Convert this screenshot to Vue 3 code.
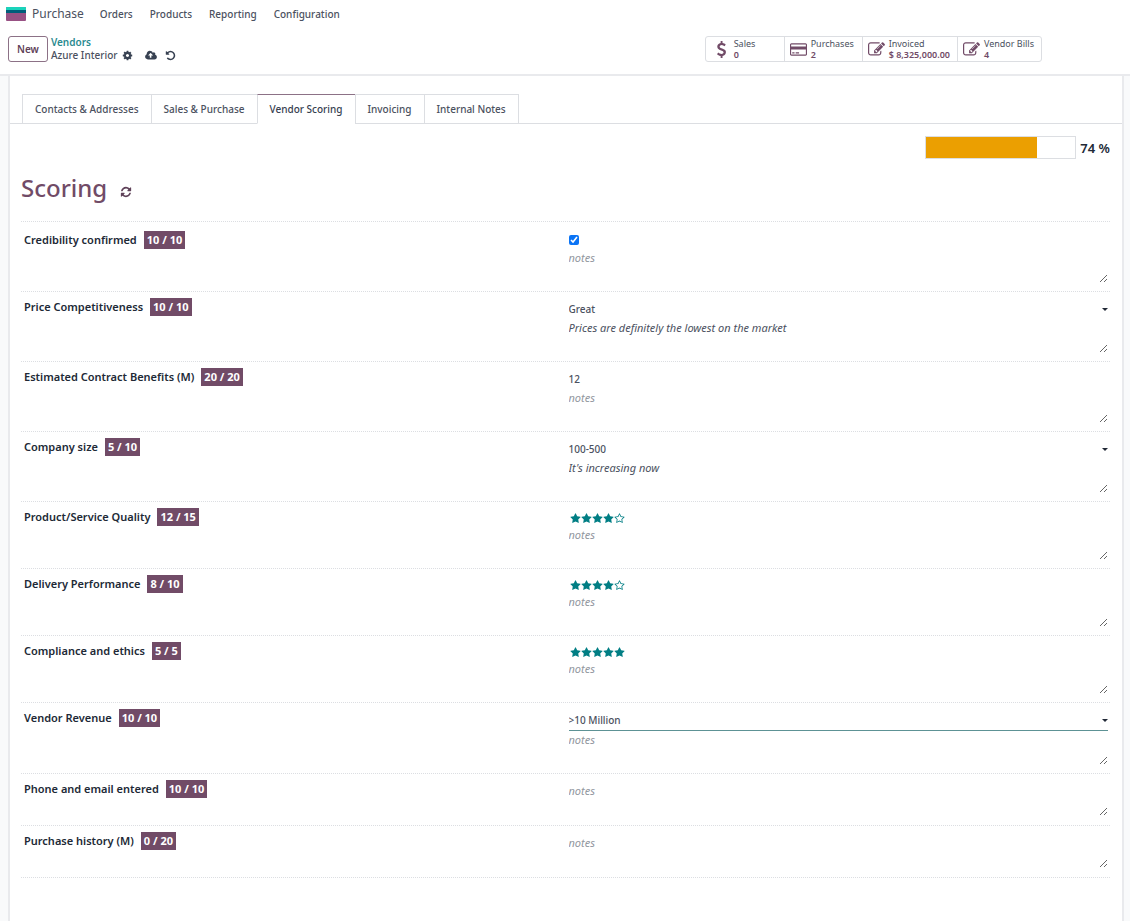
<script setup>
import { ref, computed } from 'vue'

const paths = {
  star: 'M1728 647q0 22-26 48l-363 354 86 500q1 7 1 20 0 21-10.5 35.5t-30.5 14.5q-19 0-40-12l-449-236-449 236q-22 12-40 12-21 0-31.5-14.5t-10.5-35.5q0-6 2-20l86-500-364-354q-25-27-25-48 0-37 56-46l502-73 225-455q19-41 49-41t49 41l225 455 502 73q56 9 56 46z',
  starEmpty: 'M1201 1004l306-297-422-62-189-382-189 382-422 62 306 297-73 421 378-199 377 199zm527-357q0 22-26 48l-363 354 86 500q1 7 1 20 0 50-41 50-19 0-40-12l-449-236-449 236q-22 12-40 12-21 0-31.5-14.5t-10.5-35.5q0-6 2-20l86-500-364-354q-25-27-25-48 0-37 56-46l502-73 225-455q19-41 49-41t49 41l225 455 502 73q56 9 56 46z',
  refresh: 'M1639 1056q0 5-1 7-64 268-268 434.5t-478 166.5q-146 0-282.5-55t-243.5-157l-129 129q-19 19-45 19t-45-19-19-45v-448q0-26 19-45t45-19h448q26 0 45 19t19 45-19 45l-137 137q71 66 161 102t187 36q134 0 250-65t186-179q11-17 53-117 8-23 30-23h192q13 0 22.5 9.5t9.5 22.5zm25-800v448q0 26-19 45t-45 19h-448q-26 0-45-19t-19-45 19-45l138-138q-148-137-349-137-134 0-250 65t-186 179q-11 17-53 117-8 23-30 23h-199q-13 0-22.5-9.5t-9.5-22.5v-7q65-268 270-434.5t480-166.5q146 0 284 55.5t245 156.5l130-129q19-19 45-19t45 19 19 45z',
  cog: 'M1152 896q0-106-75-181t-181-75-181 75-75 181 75 181 181 75 181-75 75-181zm512-109v222q0 12-8 23t-20 13l-185 28q-19 54-39 91 35 50 107 138 10 12 10 25t-9 23q-27 37-99 108t-94 71q-12 0-26-9l-138-108q-44 23-91 38-16 136-29 186-7 28-36 28h-222q-14 0-24.5-8.5t-11.5-21.5l-28-184q-49-16-90-37l-141 107q-10 9-25 9-14 0-25-11-126-114-165-168-7-10-7-23 0-12 8-23 15-21 51-66.5t54-70.5q-27-50-41-99l-183-27q-13-2-21-12.5t-8-23.5v-222q0-12 8-23t19-13l186-28q14-46 39-92-40-57-107-138-10-12-10-24 0-10 9-23 26-36 98.5-107.5t94.5-71.5q13 0 26 10l138 107q44-23 91-38 16-136 29-186 7-28 36-28h222q14 0 24.5 8.5t11.5 21.5l28 184q49 16 90 37l142-107q9-9 24-9 13 0 25 10 129 119 165 170 7 8 7 22 0 12-8 23-15 21-51 66.5t-54 70.5q26 50 41 98l183 28q13 2 21 12.5t8 23.5z',
  undo: 'M1664 896q0 156-61 298t-164 245-245 164-298 61q-172 0-327-72.5t-264-204.5q-7-10-6.5-22.5t8.5-20.5l137-138q10-9 25-9 16 2 23 12 73 95 179 147t225 52q104 0 198.5-40.5t163.5-109.5 109.5-163.5 40.5-198.5-40.5-198.5-109.5-163.5-163.5-109.5-198.5-40.5q-98 0-188 35.5t-160 101.5l137 138q31 30 14 69-17 40-59 40h-448q-26 0-45-19t-19-45v-448q0-42 40-59 39-17 69 14l130 129q107-101 244.5-156.5t284.5-55.5q156 0 298 61t245 164 164 245 61 298z',
  cloud: 'M1216 864q0-14-9-23l-352-352q-9-9-23-9t-23 9l-351 351q-10 12-10 24 0 14 9 23t23 9h224v352q0 13 9.5 22.5t22.5 9.5h192q13 0 22.5-9.5t9.5-22.5v-352h224q13 0 22.5-9.5t9.5-22.5zm640 288q0 159-112.5 271.5t-271.5 112.5h-1088q-185 0-316.5-131.5t-131.5-316.5q0-130 70-240t188-165q-2-30-2-43 0-212 150-362t362-150q156 0 285.5 87t188.5 231q71-62 166-62 106 0 181 75t75 181q0 76-41 138 130 31 213.5 135.5t83.5 238.5z',
  edit: 'M888 1184l116-116-152-152-116 116v56h96v96h56zm440-720q-16-16-33 1l-350 350q-17 17-1 33t33-1l350-350q17-17 1-33zm80 594v190q0 119-84.5 203.5t-203.5 84.5h-832q-119 0-203.5-84.5t-84.5-203.5v-832q0-119 84.5-203.5t203.5-84.5h832q63 0 117 25 15 7 18 23 3 17-9 29l-49 49q-14 14-32 8-23-6-45-6h-832q-66 0-113 47t-47 113v832q0 66 47 113t113 47h832q66 0 113-47t47-113v-126q0-13 9-22l64-64q15-15 35-7t20 29zm-96-738l288 288-672 672h-288v-288zm444 132l-92 92-288-288 92-92q28-28 68-28t68 28l152 152q28 28 28 68t-28 68z',
  dollar: 'M1362 1185q0 153-99.5 263.5t-258.5 136.5v175q0 14-9 23t-23 9h-135q-13 0-22.5-9.5t-9.5-22.5v-175q-66-9-127.5-31t-101.5-44.5-74-48-46.5-37.5-17.5-18q-17-21-2-41l103-135q7-10 23-12 15-2 24 9l2 2q113 99 243 125 37 8 74 8 81 0 142.5-43t61.5-122q0-28-15-53t-33.5-42-58.5-37.5-66-32-80-32.5q-39-16-61.5-25t-61.5-26.5-62.5-31-56.5-35.5-53.5-42.5-43.5-49-35.5-58-21-66.5-8.5-78q0-138 98-242t255-134v-180q0-13 9.5-22.5t22.5-9.5h135q14 0 23 9t9 23v176q57 6 110.5 23t87 33.5 63.5 37.5 39 29 15 14q17 18 5 38l-81 146q-8 15-23 16-14 3-27-7-3-3-14.5-12t-39-26.5-58.5-32-74.5-26-85.5-11.5q-95 0-155 43t-60 111q0 26 8.5 48t29.5 41.5 39.5 33 56 31 60.5 27 70 27.5q53 20 81 31.5t76 35 75.5 42.5 62 50 53 63.5 31.5 76.5 13 94z',
  card: 'M160 192h1600q66 0 113 47t47 113v1088q0 66-47 113t-113 47H160q-66 0-113-47T0 1440V352q0-66 47-113t113-47zm0 128q-32 0-32 32v192h1664V352q0-32-32-32zm-32 576v544q0 32 32 32h1600q32 0 32-32V896zM256 1216h256v128H256zm384 0h384v128H640z'
}

const menus = ['Orders', 'Products', 'Reporting', 'Configuration']
const stats = [
  { icon: 'dollar', label: 'Sales', value: '0' },
  { icon: 'card', label: 'Purchases', value: '2' },
  { icon: 'edit', label: 'Invoiced', value: '$ 8,325,000.00' },
  { icon: 'edit', label: 'Vendor Bills', value: '4' }
]
const tabs = ['Contacts & Addresses', 'Sales & Purchase', 'Vendor Scoring', 'Invoicing', 'Internal Notes']
const activeTab = ref('Vendor Scoring')

const rows = ref([
  { id: 'credibility', label: 'Credibility confirmed', score: 10, max: 10, type: 'check', value: true, notes: '' },
  { id: 'price', label: 'Price Competitiveness', score: 10, max: 10, type: 'select', options: ['Great', 'Average', 'Poor'], value: 'Great', notes: 'Prices are definitely the lowest on the market' },
  { id: 'benefits', label: 'Estimated Contract Benefits (M)', score: 20, max: 20, type: 'text', value: '12', notes: '' },
  { id: 'size', label: 'Company size', score: 5, max: 10, type: 'select', options: ['<100', '100-500', '>500'], value: '100-500', notes: "It's increasing now" },
  { id: 'quality', label: 'Product/Service Quality', score: 12, max: 15, type: 'stars', value: 4, notes: '' },
  { id: 'delivery', label: 'Delivery Performance', score: 8, max: 10, type: 'stars', value: 4, notes: '' },
  { id: 'ethics', label: 'Compliance and ethics', score: 5, max: 5, type: 'stars', value: 5, notes: '' },
  { id: 'revenue', label: 'Vendor Revenue', score: 10, max: 10, type: 'select', options: ['<1 Million', '1-10 Million', '>10 Million'], value: '>10 Million', notes: '', active: true },
  { id: 'contact', label: 'Phone and email entered', score: 10, max: 10, type: 'none', notes: '' },
  { id: 'history', label: 'Purchase history (M)', score: 0, max: 20, type: 'none', notes: '' }
])

const total = ref(74)
const fill = computed(() => ({ width: total.value + '%' }))
</script>

<template>
  <div class="app">
    <header class="top">
      <nav class="navbar">
        <svg class="logo" viewBox="0 0 20 14" aria-hidden="true">
          <rect width="20" height="14" rx="1" fill="#985184" />
          <path d="M1 0h18q1 0 1 1v3H0V1q0-1 1-1z" fill="#1ad3bb" />
          <rect y="3" width="20" height="3" fill="#005e7a" />
        </svg>
        <a href="#" class="brand">Purchase</a>
        <a v-for="m in menus" :key="m" href="#" class="menu">{{ m }}</a>
      </nav>
      <div class="panel">
        <button type="button" class="new">New</button>
        <div class="crumbs">
          <a href="#" class="parent">Vendors</a>
          <div class="current">
            <span>Azure Interior</span>
            <button type="button" class="icon-btn cog" aria-label="Actions">
              <svg viewBox="0 0 1792 1792"><path :d="paths.cog" /></svg>
            </button>
            <button type="button" class="icon-btn cloud" aria-label="Save">
              <svg viewBox="-64 0 1920 1792"><path :d="paths.cloud" /></svg>
            </button>
            <button type="button" class="icon-btn" aria-label="Discard">
              <svg viewBox="0 0 1792 1792"><path :d="paths.undo" /></svg>
            </button>
          </div>
        </div>
        <div class="stats">
          <button v-for="s in stats" :key="s.label" type="button" class="stat">
            <span class="stat-icon">
              <svg :viewBox="s.icon === 'card' ? '0 0 1920 1792' : '0 0 1792 1792'"><path fill-rule="evenodd" :d="paths[s.icon]" /></svg>
            </span>
            <span class="stat-text">
              <span>{{ s.label }}</span>
              <strong>{{ s.value }}</strong>
            </span>
          </button>
        </div>
      </div>
    </header>

    <main class="sheet">
      <div class="tabs" role="tablist">
        <button
          v-for="t in tabs"
          :key="t"
          type="button"
          role="tab"
          class="tab"
          :class="{ active: t === activeTab }"
          :aria-selected="t === activeTab"
          @click="activeTab = t"
        >{{ t }}</button>
      </div>

      <section class="content">
        <div class="total">
          <div class="bar" role="progressbar" aria-label="Total score" :aria-valuenow="total" aria-valuemin="0" aria-valuemax="100">
            <div class="bar-fill" :style="fill"></div>
          </div>
          <span>{{ total }} %</span>
        </div>

        <h1 class="title">
          Scoring
          <button type="button" class="icon-btn refresh" aria-label="Recompute">
            <svg viewBox="0 0 1792 1792"><path :d="paths.refresh" /></svg>
          </button>
        </h1>

        <div class="rows">
          <div v-for="r in rows" :key="r.id" class="row" :class="'row-' + r.type">
            <div class="name">
              <label :for="r.id">{{ r.label }}</label>
              <span class="badge">{{ r.score }} / {{ r.max }}</span>
            </div>
            <div class="value">
              <div v-if="r.type === 'check'" class="check-line">
                <input :id="r.id" v-model="r.value" type="checkbox" />
              </div>
              <div v-else-if="r.type === 'select'" class="select" :class="{ focused: r.active }">
                <select :id="r.id" v-model="r.value">
                  <option v-for="o in r.options" :key="o">{{ o }}</option>
                </select>
                <svg viewBox="0 0 6 3" aria-hidden="true"><path d="M0 0h6L3 3z" /></svg>
              </div>
              <input v-else-if="r.type === 'text'" :id="r.id" v-model="r.value" class="text" type="text" />
              <div v-else-if="r.type === 'stars'" class="rating">
                <button
                  v-for="n in 5"
                  :id="n === 1 ? r.id : undefined"
                  :key="n"
                  type="button"
                  :aria-label="n + ' of 5'"
                  :aria-pressed="n <= r.value"
                  @click="r.value = n"
                >
                  <svg viewBox="0 0 1792 1792"><path :d="n <= r.value ? paths.star : paths.starEmpty" /></svg>
                </button>
              </div>
              <textarea
                :id="r.type === 'none' ? r.id : r.id + '-notes'"
                v-model="r.notes"
                placeholder="notes"
                :aria-label="r.label + ' notes'"
              ></textarea>
            </div>
          </div>
        </div>
      </section>
    </main>
  </div>
</template>

<style>
body {
  margin: 0;
  background: #f9fafb;
}
</style>

<style scoped>
.app {
  min-height: 100vh;
  display: flex;
  flex-direction: column;
  font-family: "Noto Sans", "Open Sans", sans-serif;
  font-size: 10px;
  line-height: 16px;
  font-weight: 500;
  color: #4b5160;
}
.app * {
  box-sizing: border-box;
}
button,
input,
select,
textarea {
  font: inherit;
  color: inherit;
  margin: 0;
  padding: 0;
  border: 0;
  background: none;
}
button {
  cursor: pointer;
}
a {
  color: inherit;
  text-decoration: none;
}
svg {
  display: block;
  fill: currentColor;
}
.top {
  background: #fff;
  border-bottom: 2px solid #e9eaed;
  padding-bottom: 12px;
}
.navbar {
  display: flex;
  align-items: center;
  height: 27px;
  padding: 0 6px;
}
.logo {
  width: 20px;
  height: 14px;
  margin-right: 6px;
}
.brand {
  font-size: 12px;
  font-weight: 400;
  margin-right: 8px;
}
.menu {
  padding: 0 8px;
}
.menu + .menu {
  margin-left: 1px;
}
.panel {
  display: flex;
  align-items: center;
  padding: 9px 88px 0 8px;
}
.new {
  height: 26px;
  padding: 0 8px;
  border: 1px solid #8c7186;
  border-radius: 3px;
  color: #5f4259;
  font-weight: 600;
}
.crumbs {
  margin-left: 3px;
  line-height: 13px;
}
.parent {
  display: block;
  color: #2a8a8f;
  font-weight: 600;
}
.current {
  display: flex;
  align-items: center;
}
.icon-btn svg {
  width: 11px;
  height: 11px;
}
.current .icon-btn {
  color: #374151;
}
.cog {
  margin: 0 12px 0 4px;
}
.cloud {
  margin-right: 8px;
}
.cloud svg {
  width: 12px;
}
.stats {
  display: flex;
  margin-left: auto;
  border: 1px solid #dcdee2;
  border-radius: 3px;
}
.stat {
  display: flex;
  align-items: center;
  min-width: 78px;
  height: 24px;
  padding: 0 7px 0 4px;
  text-align: left;
}
.stat + .stat {
  border-left: 1px solid #dcdee2;
}
.stat-icon {
  display: flex;
  justify-content: center;
  width: 19px;
  margin-right: 3px;
  color: #714b67;
}
.stat-icon svg {
  width: 17px;
  height: 17px;
}
.stat:first-child .stat-icon {
  width: 23px;
  margin-right: 1px;
}
.stat-text {
  display: flex;
  flex-direction: column;
  font-size: 9px;
  line-height: 11px;
  font-weight: 400;
}
.stat-text strong {
  font-weight: 600;
  color: #714b67;
}
.sheet {
  flex: 1;
  margin: 0 6px 0 8px;
  padding-top: 18px;
  background: #fff;
  border: solid #e9eaed;
  border-width: 0 2px;
}
.tabs {
  display: flex;
  padding-left: 12px;
  border-bottom: 1px solid #dcdee2;
}
.tab {
  height: 30px;
  margin: 0 0 -1px -1px;
  padding: 0 12px;
  border: 1px solid #dcdee2;
}
.tab:first-child {
  margin-left: 0;
}
.tab.active {
  border-top-color: #8c7186;
  border-bottom-color: #fff;
  background: #fff;
  color: #374151;
}
.content {
  padding: 12px 12px 24px 11px;
}
.total {
  display: flex;
  justify-content: flex-end;
  align-items: center;
  gap: 4px;
  font-size: 13px;
  font-weight: 600;
  color: #212936;
}
.bar {
  width: 151px;
  height: 23px;
  border: 1px solid #dcdee2;
}
.bar-fill {
  height: 100%;
  background: #eb9f01;
}
.title {
  display: flex;
  align-items: center;
  gap: 13px;
  margin: 11px 0 15px;
  font-size: 24px;
  line-height: 36px;
  font-weight: 500;
  color: #714b67;
}
.refresh {
  padding-top: 8px;
  color: #5f4259;
}
.refresh svg {
  width: 12px;
  height: 12px;
}
.rows {
  border-bottom: 1px dotted #dcdee2;
}
.row {
  display: grid;
  grid-template-columns: 1fr 1fr;
  column-gap: 5px;
  padding: 6px 2px 8px 3px;
  border-top: 1px dotted #dcdee2;
}
.value {
  padding-top: 1px;
}
.row-check {
  padding: 9px 2px 8px 3px;
}
.row-check .value {
  padding-top: 0;
}
.row-none .value {
  padding-top: 2px;
}
.name {
  display: flex;
  align-items: flex-start;
  gap: 7px;
  font-size: 11px;
  line-height: 18px;
  font-weight: 600;
  color: #212936;
}
.badge {
  padding: 0 3px;
  background: #714b67;
  color: #fff;
  font-weight: 700;
}
.check-line {
  display: flex;
  align-items: center;
  height: 18px;
}
.check-line input {
  width: 10px;
  height: 10px;
  accent-color: #0b74f5;
}
.select {
  display: grid;
  align-items: center;
  height: 20px;
}
.select select,
.select svg {
  grid-area: 1 / 1;
}
.select select {
  appearance: none;
  width: 100%;
}
.select svg {
  width: 6px;
  height: 3px;
  justify-self: end;
  color: #212936;
  pointer-events: none;
}
.select.focused {
  height: 21px;
  border-bottom: 1px solid #5d9295;
}
.text {
  display: block;
  width: 100%;
  height: 20px;
}
.rating {
  display: flex;
  height: 17px;
  padding: 2px 0 0 1px;
  align-items: center;
  color: #017e84;
}
.rating svg {
  width: 11px;
  height: 11px;
}
textarea {
  display: block;
  width: 100%;
  height: 34px;
  padding: 1px 0;
  font-size: 11px;
  font-weight: 400;
  font-style: italic;
  resize: vertical;
}
textarea::placeholder {
  color: #9297a0;
}
.row-none {
  padding-bottom: 9px;
}
</style>
